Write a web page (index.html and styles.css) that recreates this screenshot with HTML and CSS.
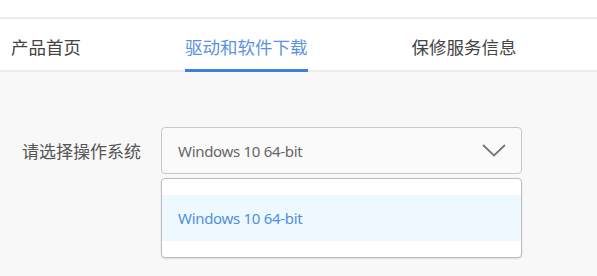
FILE: index.html
```html
<!DOCTYPE html>
<html lang="zh-CN">
<head>
  <meta charset="UTF-8" />
  <meta name="viewport" content="width=device-width, initial-scale=1" />
  <title>驱动和软件下载</title>
  <link rel="stylesheet" href="styles.css">
</head>
<body>
  <!-- Top strip -->
  <div class="topbar"></div>

  <!-- Tabs -->
  <nav class="tabs">
    <div class="tab">产品首页</div>
    <div class="tab active">驱动和软件下载</div>
    <div class="tab">保修服务信息</div>
  </nav>

  <!-- OS picker -->
  <main class="content">
    <div class="picker">
      <div class="picker-label">请选择操作系统</div>
      <div class="select">
        <span class="select-value">Windows 10 64-bit</span>
        <svg class="chevron" width="24" height="13" viewBox="0 0 24 13">
          <polyline points="1,1 12,11.5 23,1" fill="none" stroke="#777" stroke-width="1.8" />
        </svg>
      </div>
      <ul class="options">
        <li class="option selected">Windows 10 64-bit</li>
      </ul>
    </div>
  </main>
</body>
</html>
```

FILE: styles.css
```css
* { box-sizing: border-box; margin: 0; padding: 0; }
html, body {
  height: 100%;
  overflow: hidden;
}
body {
  font-family: "Noto Sans", "Noto Sans CJK SC", sans-serif;
  background: #f8f8f8;
  color: #444;
}

/* Top strip */
.topbar {
  height: 19px;
  background: #fff;
  border-bottom: 2px solid #ececec;
}

/* Tabs */
.tabs {
  display: flex;
  gap: 104px;
  height: 53px;
  padding: 3px 0 0 11px;
  background: #fff;
  border-bottom: 2px solid #ececec;
}
.tab {
  position: relative;
  display: flex;
  align-items: center;
  font-size: 17.5px;
  color: #444;
  white-space: nowrap;
}
.tab.active { color: #5b93e3; }
.tab.active::after {
  content: "";
  position: absolute;
  left: 0; right: 0;
  bottom: -2px;
  height: 3px;
  background: #3d7fe0;
}

/* OS picker */
.content {
  padding: 55px 0 0 22px;
}
.picker {
  display: grid;
  grid-template-columns: 139px 361px;
  row-gap: 4px;
  align-items: center;
}
.picker-label {
  font-size: 17px;
  color: #555;
}
.select {
  display: flex;
  align-items: center;
  justify-content: space-between;
  height: 47px;
  padding: 0 15px 0 16px;
  border: 1px solid #c8c8c8;
  border-radius: 4px;
  background: #fafafa;
}
.select-value {
  font-size: 15px;
  letter-spacing: -0.3px;
  color: #666;
}
.chevron { display: block; }

.options {
  grid-column: 2;
  list-style: none;
  padding: 16px 0;
  background: #fff;
  border: 1px solid #bdbdbd;
  border-radius: 4px;
  box-shadow: 0 1px 2px rgba(0,0,0,0.12);
}
.option {
  height: 46px;
  display: flex;
  align-items: center;
  padding-left: 16px;
  font-size: 15px;
  letter-spacing: -0.3px;
}
.option.selected {
  background: #eef8ff;
  color: #4f8fe3;
}
```
